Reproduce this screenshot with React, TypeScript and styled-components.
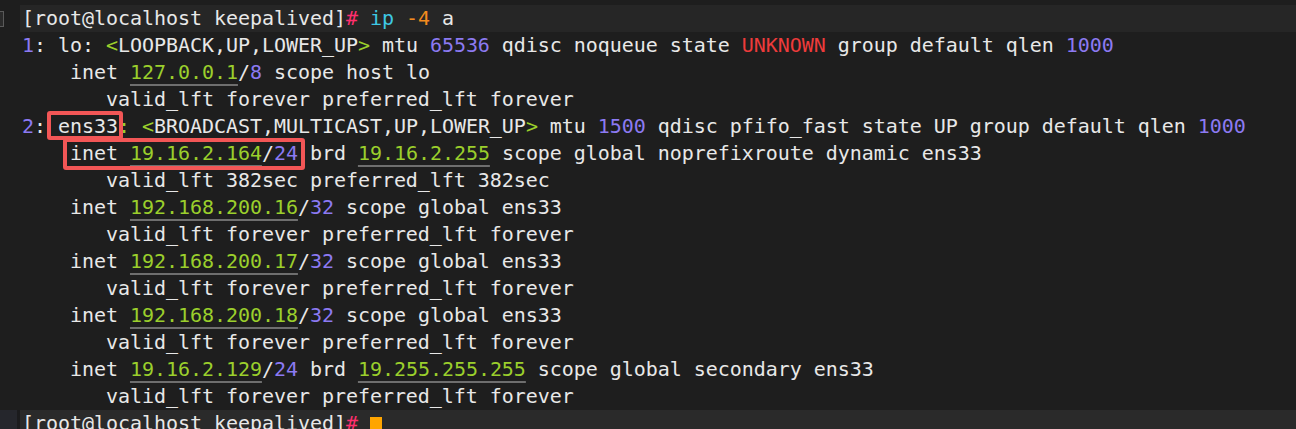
import React from "react";
import styled, { createGlobalStyle, css } from "styled-components";

const GlobalStyle = createGlobalStyle`
  html, body { margin: 0; padding: 0; background: #1e1e1e; }
  #root { width: 1296px; height: 429px; }
`;

const Terminal = styled.div`
  width: 1296px;
  height: 429px;
  overflow: hidden;
  background: #1e1e1e;
  color: #e8e8e8;
  font-family: "DejaVu Sans Mono", "Liberation Mono", monospace;
  font-size: 20px;
  letter-spacing: -0.045px;
  display: flex;
  flex-direction: column;
`;

const TopStrip = styled.div`
  height: 5px;
  flex: none;
`;

type RowKind = "plain" | "top" | "bottom";

const Row = styled.div<{ $kind?: RowKind }>`
  display: flex;
  height: 27px;
  line-height: 27px;
  flex: none;
  white-space: pre;
`;

const Gutter = styled.div<{ $kind?: RowKind }>`
  width: 20px;
  flex: none;
  display: flex;
  align-items: center;
  box-sizing: border-box;
  ${(p) =>
    p.$kind === "bottom" &&
    css`
      background: #25262c;
      border-right: 3px solid #1b1b1d;
    `}
`;

const GutterMark = styled.div`
  width: 10px;
  height: 14px;
  margin-left: -8px;
  border: 1px solid #5a5a5a;
  background: #2b2b2b;
`;

const Content = styled.div<{ $kind?: RowKind }>`
  flex: 1;
  padding-left: 2px;
  ${(p) => p.$kind === "top" && css`background: #262626;`}
  ${(p) => p.$kind === "bottom" && css`background: #2a2a2a;`}
`;

const Num = styled.span`color: #8c7af2;`;
const Ip = styled.span`
  color: #9bcf2c;
  text-decoration: underline;
  text-decoration-color: #6e6e6e;
  text-decoration-thickness: 2px;
  text-underline-offset: 5px;
`;
const Bracket = styled.span`color: #9bcf2c;`;
const Err = styled.span`color: #ee3b3b;`;
const Hash = styled.span`color: #ff2f6e;`;
const Cmd = styled.span`color: #3ec8e4;`;
const Flag = styled.span`color: #f28b1e;`;

const Cursor = styled.span`
  display: inline-block;
  width: 12px;
  height: 19px;
  background: #ffa500;
  vertical-align: -6px;
`;

const Marked = styled.span<{ $l: number; $r: number; $t: number; $b: number }>`
  position: relative;
  display: inline-block;
  line-height: 27px;
  &::after {
    content: "";
    position: absolute;
    left: ${(p) => p.$l}px;
    right: ${(p) => p.$r}px;
    top: ${(p) => p.$t}px;
    bottom: ${(p) => p.$b}px;
    border: 4px solid #f25656;
    border-radius: 3px;
    pointer-events: none;
  }
`;

const Line: React.FC<{ kind?: RowKind; children?: React.ReactNode }> = ({ kind = "plain", children }) => (
  <Row $kind={kind}>
    <Gutter $kind={kind}>{kind === "top" && <GutterMark />}</Gutter>
    <Content $kind={kind}>{children}</Content>
  </Row>
);

const Prompt = () => (
  <>
    [root@localhost keepalived]<Hash>#</Hash>
  </>
);

const InetLine: React.FC<{ ip: string; mask: string; rest: React.ReactNode }> = ({ ip, mask, rest }) => (
  <Line>
    {"    inet "}
    <Ip>{ip}</Ip>/<Num>{mask}</Num>
    {rest}
  </Line>
);

const ValidLine: React.FC<{ text?: string }> = ({ text = "valid_lft forever preferred_lft forever" }) => (
  <Line>{"       " + text}</Line>
);

export default function App() {
  return (
    <>
      <GlobalStyle />
      <Terminal>
        <TopStrip />
        <Line kind="top">
          <Prompt /> <Cmd>ip</Cmd> <Flag>-4</Flag> a
        </Line>
        <Line>
          <Num>1</Num>: lo: <Bracket>&lt;</Bracket>LOOPBACK,UP,LOWER_UP<Bracket>&gt;</Bracket> mtu{" "}
          <Num>65536</Num> qdisc noqueue state <Err>UNKNOWN</Err> group default qlen <Num>1000</Num>
        </Line>
        <InetLine ip="127.0.0.1" mask="8" rest=" scope host lo" />
        <ValidLine />
        <Line>
          <Num>2</Num>:{" "}
          <Marked $l={-11} $r={-5} $t={-2} $b={0}>
            ens33
          </Marked>
          <Bracket>:</Bracket> <Bracket>&lt;</Bracket>BROADCAST,MULTICAST,UP,LOWER_UP<Bracket>&gt;</Bracket> mtu{" "}
          <Num>1500</Num> qdisc pfifo_fast state UP group default qlen <Num>1000</Num>
        </Line>
        <Line>
          {"    "}
          <Marked $l={-7} $r={-7} $t={-2} $b={-3}>
            inet <Ip>19.16.2.164</Ip>/<Num>24</Num>
          </Marked>
          {" brd "}
          <Ip>19.16.2.255</Ip> scope global noprefixroute dynamic ens33
        </Line>
        <ValidLine text="valid_lft 382sec preferred_lft 382sec" />
        <InetLine ip="192.168.200.16" mask="32" rest=" scope global ens33" />
        <ValidLine />
        <InetLine ip="192.168.200.17" mask="32" rest=" scope global ens33" />
        <ValidLine />
        <InetLine ip="192.168.200.18" mask="32" rest=" scope global ens33" />
        <ValidLine />
        <InetLine
          ip="19.16.2.129"
          mask="24"
          rest={
            <>
              {" brd "}
              <Ip>19.255.255.255</Ip> scope global secondary ens33
            </>
          }
        />
        <ValidLine />
        <Line kind="bottom">
          <Prompt /> <Cursor />
        </Line>
      </Terminal>
    </>
  );
}
